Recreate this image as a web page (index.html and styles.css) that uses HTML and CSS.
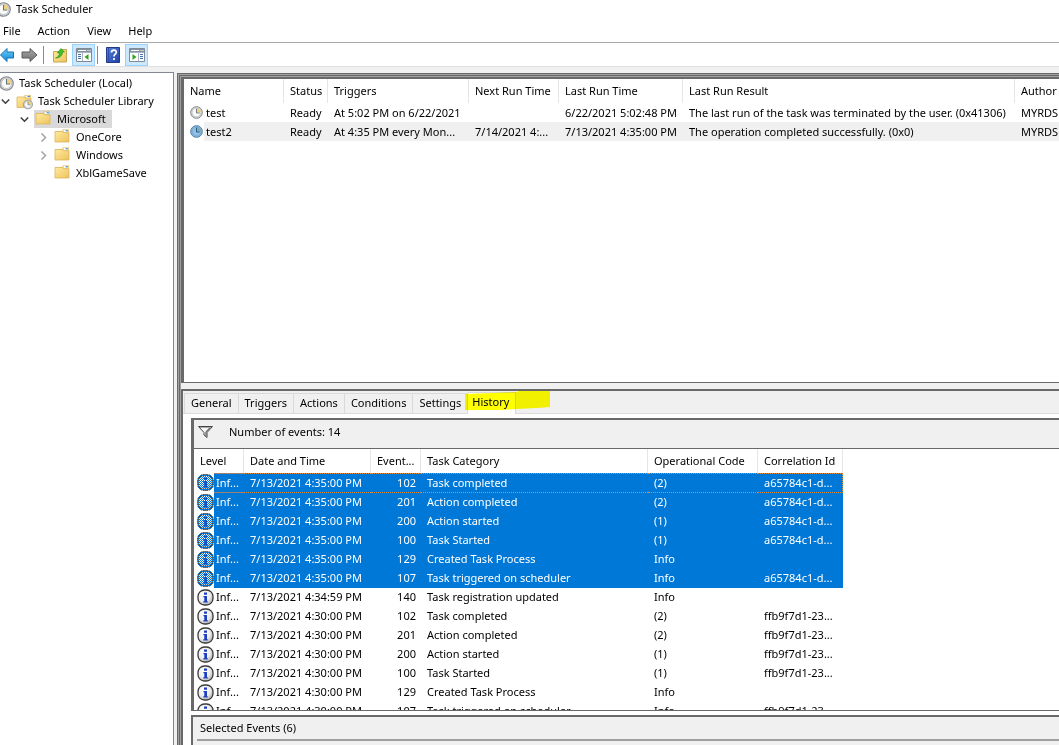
FILE: index.html
```html
<!DOCTYPE html>
<html lang="en">
<head>
<meta charset="utf-8">
<title>Task Scheduler</title>
<link rel="stylesheet" href="styles.css">
</head>
<body>
<svg class="defs" aria-hidden="true">
  <defs>
    <linearGradient id="folderFill" x1="0" y1="0" x2="1" y2="1"><stop offset="0" stop-color="#ffeaa0"/><stop offset="1" stop-color="#edc35c"/></linearGradient>
    <linearGradient id="arrowBlue" x1="0" y1="0" x2="0" y2="1"><stop offset="0" stop-color="#6fd0f7"/><stop offset="1" stop-color="#0c86d8"/></linearGradient>
    <linearGradient id="arrowGray" x1="0" y1="0" x2="0" y2="1"><stop offset="0" stop-color="#a8a8a8"/><stop offset="1" stop-color="#707070"/></linearGradient>
    <linearGradient id="helpFill" x1="0" y1="0" x2="1" y2="1"><stop offset="0" stop-color="#5b83dc"/><stop offset="1" stop-color="#1d3fa6"/></linearGradient>
    <radialGradient id="ball" cx=".4" cy=".35" r=".7"><stop offset="0" stop-color="#fff"/><stop offset=".6" stop-color="#ececec"/><stop offset="1" stop-color="#a8a8a8"/></radialGradient>
    <pattern id="dots" width="2" height="2" patternUnits="userSpaceOnUse"><path d="M0 0h1v1H0zM1 1h1v1H1z" fill="#0078d7"/></pattern>
  </defs>
  <symbol id="clock" viewBox="0 0 16 16">
    <circle cx="8" cy="8" r="7.2" fill="#d3d7dc" stroke="#85878a" stroke-width="1.2"/>
    <circle cx="8" cy="8" r="5.4" fill="#fbfbf6" stroke="#b4b8bd" stroke-width=".8"/>
    <path d="M8 8V2.8A5.2 5.2 0 0 1 13.2 8z" fill="#f3d078"/>
    <path d="M8 3.2V8.6H12" fill="none" stroke="#5f6f7c" stroke-width="1.1"/>
  </symbol>
  <symbol id="clockSel" viewBox="0 0 16 16">
    <circle cx="8" cy="8" r="7.2" fill="#8db9dd" stroke="#4b7ea8" stroke-width="1.2"/>
    <circle cx="8" cy="8" r="5.4" fill="#8fc0e8" stroke="#6d9dc4" stroke-width=".8"/>
    <path d="M8 8V2.8A5.2 5.2 0 0 1 13.2 8z" fill="#83b0a9"/>
    <path d="M8 3.2V8.6H12" fill="none" stroke="#234f78" stroke-width="1.1"/>
  </symbol>
  <symbol id="folder" viewBox="0 0 16 16">
    <path d="M1 3.5h7.500V1.500H15v3H1z" fill="#e2b653"/>
    <path d="M9.500 2h4.800v2.200H9.500z" fill="#fff"/><path d="M11.500 2.200h2.500v1.200h-2.500z" fill="#3a98dc"/>
    <path d="M1 3.500h7.500l.8 1.200H15V14H1z" fill="url(#folderFill)" stroke="#dcb45a" stroke-width=".8"/>
  </symbol>
  <symbol id="info" viewBox="0 0 17 17">
    <rect x="1" y="1" width="15" height="15" rx="6.500" fill="url(#ball)" stroke="#3b3b3b" stroke-width="1.300"/>
    <path d="M7 3.500h3v2.300H7zM6.400 7h3.600v5.200h.8v1.200H6.300v-1.200h1V8.200h-.9z" fill="#1c3fc0"/>
  </symbol>
  <symbol id="infoSel" viewBox="0 0 17 17">
    <use href="#info"/>
    <rect width="17" height="17" rx="7" fill="url(#dots)"/>
    <path d="M7 3.500h3v2.300H7zM6.400 7h3.600v5.200h.8v1.200H6.300v-1.200h1V8.200h-.9z" fill="#0b4fc4" opacity=".6"/>
  </symbol>
  <symbol id="down" viewBox="0 0 9 9"><path d="M.8 2.500l3.700 3.700L8.200 2.500" fill="none" stroke="#404040" stroke-width="1.600"/></symbol>
  <symbol id="right" viewBox="0 0 9 9"><path d="M2.500.5l4 4-4 4" fill="none" stroke="#a3a3a3" stroke-width="1.500"/></symbol>
</svg>

<header>
  <div class="title"><svg class="i15"><use href="#clock"/></svg><h1>Task Scheduler</h1></div>
  <nav class="menu"><button>File</button><button>Action</button><button>View</button><button>Help</button></nav>
  <div class="toolbar">
    <button class="back" aria-label="Back"><svg width="14" height="16" viewBox="0 0 14 16"><path d="M.5 8L7 1.500V5h6.500v6H7v3.500z" fill="url(#arrowBlue)" stroke="#1473b4"/></svg></button>
    <button class="fwd" aria-label="Forward"><svg width="17" height="16" viewBox="0 0 17 16"><path d="M16 8L9 1.500V5H1v6h8v3.500z" fill="url(#arrowGray)" stroke="#5c5c5c"/></svg></button>
    <i class="bar"></i>
    <button class="tool" aria-label="Up one level"><svg width="16" height="16" viewBox="0 0 16 16"><path d="M1.500 4.500h6l1.500-2h5.500V15h-13z" fill="url(#folderFill)" stroke="#c9a54f"/><path d="M3.500 11c2.500-1 4-2.500 4-5H5.300L9 1.500 12.500 5h-2c0 4-3 6-7 6z" fill="#3fc02c" stroke="#249216" stroke-width=".6"/></svg></button>
    <button class="tool on" aria-label="Show console tree"><svg width="16" height="16" viewBox="0 0 16 16"><path d="M.5 1.500h15v13H.5z" fill="#fff" stroke="#7f8a96"/><path d="M1 2h14v3H1z" fill="#8592a0"/><path d="M2 3h8v1H2zM11.500 3h1v1h-1zM13.500 3h1v1h-1z" fill="#fff"/><path d="M1 5.500h14M6.500 6v8" stroke="#a9b4c0"/><path d="M2 7.500h3M2 9.500h3M2 11.500h3" stroke="#4272b8"/><path d="M12.500 7v6L8.500 10z" fill="#2fa51d"/></svg></button>
    <i class="bar"></i>
    <button class="tool" aria-label="Help"><svg width="14" height="16" viewBox="0 0 14 16"><path d="M.5.500h13v15H.5z" fill="url(#helpFill)" stroke="#203a86"/><path d="M2.500 1v14" stroke="#2c4dab"/><path d="M5.500 5.500c0-3.300 4.800-3 4.800-.3 0 2-2.300 2-2.300 4.300M8 11v2" fill="none" stroke="#fff" stroke-width="1.700"/></svg></button>
    <button class="tool on" aria-label="Show action pane"><svg width="16" height="16" viewBox="0 0 16 16"><path d="M.5 1.500h15v13H.5z" fill="#fff" stroke="#7f8a96"/><path d="M1 2h14v3H1z" fill="#8592a0"/><path d="M2 3h8v1H2zM11.500 3h1v1h-1zM13.500 3h1v1h-1z" fill="#fff"/><path d="M1 5.500h14M9.500 6v8" stroke="#a9b4c0"/><path d="M11 7.500h3M11 9.500h3M11 11.500h3" stroke="#4272b8"/><path d="M3.500 7v6l4-3z" fill="#2fa51d"/></svg></button>
  </div>
</header>

<main>
  <ul class="tree">
    <li class="root"><svg class="i15"><use href="#clock"/></svg><span>Task Scheduler (Local)</span></li>
    <li class="l1"><svg class="chev"><use href="#down"/></svg><svg class="i17" viewBox="0 0 17 16"><use href="#folder" width="16" height="16"/><use href="#clock" x="7" y="6" width="10" height="10"/></svg><span>Task Scheduler Library</span></li>
    <li class="l2"><svg class="chev"><use href="#down"/></svg><span class="current"><svg class="i16"><use href="#folder"/></svg><span>Microsoft</span></span></li>
    <li class="l3"><svg class="chev"><use href="#right"/></svg><svg class="i16"><use href="#folder"/></svg><span>OneCore</span></li>
    <li class="l3"><svg class="chev"><use href="#right"/></svg><svg class="i16"><use href="#folder"/></svg><span>Windows</span></li>
    <li class="l3"><svg class="chev"></svg><svg class="i16"><use href="#folder"/></svg><span>XblGameSave</span></li>
  </ul>

  <div class="frame">
    <section class="tasks">
      <table>
        <colgroup><col class="w100"><col class="w44"><col class="w141"><col class="w90"><col class="w124"><col class="w332"><col class="w141"></colgroup>
        <thead><tr><th>Name</th><th>Status</th><th>Triggers</th><th>Next Run Time</th><th>Last Run Time</th><th>Last Run Result</th><th>Author</th></tr></thead>
        <tbody>
          <tr><td><div class="lead"><svg class="i13"><use href="#clock"/></svg>test</div></td><td>Ready</td><td>At 5:02 PM on 6/22/2021</td><td></td><td>6/22/2021 5:02:48 PM</td><td>The last run of the task was terminated by the user. (0x41306)</td><td>MYRDS</td></tr>
          <tr class="hot"><td><div class="lead"><svg class="i13"><use href="#clockSel"/></svg>test2</div></td><td>Ready</td><td>At 4:35 PM every Mon...</td><td>7/14/2021 4:...</td><td>7/13/2021 4:35:00 PM</td><td>The operation completed successfully. (0x0)</td><td>MYRDS</td></tr>
        </tbody>
      </table>
    </section>

    <section class="details">
      <div class="tabs">
        <button>General</button><button>Triggers</button><button>Actions</button><button>Conditions</button><button>Settings</button><button class="active">History</button>
        <svg class="marker" viewBox="0 0 85 20" aria-hidden="true"><path d="M0 3L28 2 53 1V0h32v16L72 17 52 18 35 19H0z" fill="#ff0"/></svg>
      </div>
      <div class="page">
        <div class="history">
          <div class="count"><svg width="15" height="12" viewBox="0 0 15 12"><path d="M.5.500h14L9 6.500v5L6 9V6.500z" fill="#f8f8f8" stroke="#444"/><path d="M2 1.500h11" stroke="#aaa"/><path d="M8 6l4-4M8 6v4" stroke="#777" stroke-width="1.500"/></svg>Number of events: 14</div>
          <div class="events">
            <table>
              <colgroup><col class="w50"><col class="w127"><col class="w50"><col class="w227"><col class="w110"><col class="w85"></colgroup>
              <thead><tr><th>Level</th><th>Date and Time</th><th>Event...</th><th>Task Category</th><th>Operational Code</th><th>Correlation Id</th></tr></thead>
              <tbody>
                <tr class="sel focus"><td><div class="lead"><svg class="i17"><use href="#infoSel"/></svg>Inf...</div></td><td>7/13/2021 4:35:00 PM</td><td class="num">102</td><td>Task completed</td><td>(2)</td><td>a65784c1-d...</td></tr>
                <tr class="sel"><td><div class="lead"><svg class="i17"><use href="#infoSel"/></svg>Inf...</div></td><td>7/13/2021 4:35:00 PM</td><td class="num">201</td><td>Action completed</td><td>(2)</td><td>a65784c1-d...</td></tr>
                <tr class="sel"><td><div class="lead"><svg class="i17"><use href="#infoSel"/></svg>Inf...</div></td><td>7/13/2021 4:35:00 PM</td><td class="num">200</td><td>Action started</td><td>(1)</td><td>a65784c1-d...</td></tr>
                <tr class="sel"><td><div class="lead"><svg class="i17"><use href="#infoSel"/></svg>Inf...</div></td><td>7/13/2021 4:35:00 PM</td><td class="num">100</td><td>Task Started</td><td>(1)</td><td>a65784c1-d...</td></tr>
                <tr class="sel"><td><div class="lead"><svg class="i17"><use href="#infoSel"/></svg>Inf...</div></td><td>7/13/2021 4:35:00 PM</td><td class="num">129</td><td>Created Task Process</td><td>Info</td><td></td></tr>
                <tr class="sel"><td><div class="lead"><svg class="i17"><use href="#infoSel"/></svg>Inf...</div></td><td>7/13/2021 4:35:00 PM</td><td class="num">107</td><td>Task triggered on scheduler</td><td>Info</td><td>a65784c1-d...</td></tr>
                <tr><td><div class="lead"><svg class="i17"><use href="#info"/></svg>Inf...</div></td><td>7/13/2021 4:34:59 PM</td><td class="num">140</td><td>Task registration updated</td><td>Info</td><td></td></tr>
                <tr><td><div class="lead"><svg class="i17"><use href="#info"/></svg>Inf...</div></td><td>7/13/2021 4:30:00 PM</td><td class="num">102</td><td>Task completed</td><td>(2)</td><td>ffb9f7d1-23...</td></tr>
                <tr><td><div class="lead"><svg class="i17"><use href="#info"/></svg>Inf...</div></td><td>7/13/2021 4:30:00 PM</td><td class="num">201</td><td>Action completed</td><td>(2)</td><td>ffb9f7d1-23...</td></tr>
                <tr><td><div class="lead"><svg class="i17"><use href="#info"/></svg>Inf...</div></td><td>7/13/2021 4:30:00 PM</td><td class="num">200</td><td>Action started</td><td>(1)</td><td>ffb9f7d1-23...</td></tr>
                <tr><td><div class="lead"><svg class="i17"><use href="#info"/></svg>Inf...</div></td><td>7/13/2021 4:30:00 PM</td><td class="num">100</td><td>Task Started</td><td>(1)</td><td>ffb9f7d1-23...</td></tr>
                <tr><td><div class="lead"><svg class="i17"><use href="#info"/></svg>Inf...</div></td><td>7/13/2021 4:30:00 PM</td><td class="num">129</td><td>Created Task Process</td><td>Info</td><td></td></tr>
                <tr><td><div class="lead"><svg class="i17"><use href="#info"/></svg>Inf...</div></td><td>7/13/2021 4:30:00 PM</td><td class="num">107</td><td>Task triggered on scheduler</td><td>Info</td><td>ffb9f7d1-23...</td></tr>
              </tbody>
            </table>
          </div>
        </div>
        <div class="selected"><h2>Selected Events (6)</h2></div>
      </div>
    </section>
  </div>
</main>
</body>
</html>
```

FILE: styles.css
```css
* { box-sizing: border-box; }
body {
  margin: 0;
  height: 100vh;
  display: flex;
  flex-direction: column;
  overflow: hidden;
  background: #f0f0f0;
  color: #000;
  font: 11px/18px "Noto Sans", "Open Sans", sans-serif;
  white-space: nowrap;
}
.defs { position: absolute; width: 0; height: 0; }
svg { display: block; flex: none; }
button { font: inherit; color: inherit; background: none; border: 0; margin: 0; padding: 0; }
h1, h2 { font: inherit; margin: 0; }
.i13 { width: 13px; height: 13px; }
.i15 { width: 15px; height: 15px; }
.i16 { width: 16px; height: 16px; }
.i17 { width: 17px; height: 17px; }

header { flex: none; background: #fff; border-bottom: 1px solid #e0e0e0; }
.title { display: flex; align-items: center; gap: 5px; height: 20px; margin-left: -4px; padding-bottom: 2px; }
.menu { display: flex; gap: 17px; height: 23px; padding: 2px 0 3px 3px; border-bottom: 1px solid #a8a8a8; }
.toolbar { display: flex; align-items: center; height: 23px; }
.tool { display: grid; place-items: center; width: 24px; height: 22px; }
.fwd { margin-left: 7px; }
.on { width: 23px; background: #cce8ff; border: 1px solid #99d1ff; }
.bar { width: 1px; height: 18px; margin: 0 4px 0 5px; background: #8c8c8c; }
.tool + .bar { margin: 0 3px 0 2px; }

main { flex: 1; min-height: 0; display: flex; padding-top: 5px; }
.tree {
  flex: 0 0 174px;
  margin: 0;
  padding: 1px 0;
  list-style: none;
  background: #fff;
  border: solid #828790;
  border-width: 1px 1px 0 0;
}
.tree li { display: flex; align-items: center; height: 18px; gap: 5px; }
.tree .i16 { margin-top: -2px; }
.chev { width: 9px; height: 9px; }
.tree .root { margin-left: -1px; }
.tree .l1 { padding-left: 1px; }
.tree .l1 .chev { margin-right: 1px; }
.tree .l2 { padding-left: 20px; }
.current { display: flex; align-items: center; gap: 6px; height: 18px; padding: 0 6px 0 1px; background: #d9d9d9; }
.tree .l3 { padding-left: 39px; gap: 6px; }

.frame {
  flex: 1;
  min-width: 0;
  display: flex;
  flex-direction: column;
  margin: 1px 0 0 3px;
  padding: 4px 0 0 4px;
  box-shadow: inset 1px 1px #696969, inset 2px 2px #a0a0a0, inset 3px 3px #696969, inset 4px 4px #a0a0a0;
}
table { border-collapse: separate; border-spacing: 0; table-layout: fixed; width: 0; }
.w44 { width: 44px; }
.w50 { width: 50px; }
.w85 { width: 85px; }
.w90 { width: 90px; }
.w100 { width: 100px; }
.w110 { width: 110px; }
.w124 { width: 124px; }
.w127 { width: 127px; }
.w141 { width: 141px; }
.w227 { width: 227px; }
.w332 { width: 332px; }
th, td { padding: 0 0 0 6px; text-align: left; font-weight: 400; }
th { height: 24px; border-right: 1px solid #e5e5e5; }
td { height: 19px; }
.lead { display: flex; align-items: center; gap: 3px; }
.num { text-align: right; padding-right: 5px; }

.tasks {
  flex: 305 1 0;
  min-height: 0;
  overflow: hidden;
  background: #fff;
  border: solid #696969;
  border-width: 2px 0 1px 3px;
}
.hot td { background: #f0f0f0; }
.hot td:first-child { background: linear-gradient(to right, #fff 20px, #f0f0f0 20px); }

.details {
  flex: 357 1 0;
  min-height: 0;
  display: flex;
  flex-direction: column;
  margin-top: 6px;
  border: solid #696969;
  border-width: 2px 0 0 2px;
  overflow: hidden;
}
.tabs { position: relative; flex: none; display: flex; align-items: flex-end; height: 23px; padding: 0 1px; border-bottom: 1px solid #dcdcdc; }
.tabs button { height: 20px; padding: 0 6px; border: solid #d9d9d9; border-width: 1px 1px 0 0; }
.tabs button:first-child { border-left-width: 1px; }
.tabs .active { height: 22px; margin-bottom: -1px; padding: 0 6px 4px 4px; background: #fff; }
.marker { position: absolute; left: 282px; top: 0; width: 85px; height: 20px; mix-blend-mode: multiply; }
.page { flex: 1; min-height: 0; display: flex; flex-direction: column; gap: 4px; padding: 4px 0 0 8px; background: #fff; }
.history { flex: 1; min-height: 0; display: flex; flex-direction: column; border: solid #696969; border-width: 2px 0 1px 3px; }
.count { flex: none; display: flex; align-items: center; gap: 16px; height: 29px; padding: 0 0 3px 4px; background: #f0f0f0; border-bottom: 1px solid #696969; }
.events { flex: 1; min-height: 0; overflow: hidden; }
.events .lead { margin-left: -3px; gap: 2px; }
.sel td { background: #0078d7; color: #fff; }
.sel td:first-child { background: linear-gradient(to right, #fff 20px, #0078d7 20px); }
.focus td { border: dotted #e08a3c; border-width: 1px 0; }
.focus td:first-child { border-image: linear-gradient(to right, transparent 20px, #a08070 20px) 1; }
.focus td:last-child { border-right-width: 1px; }
.selected { flex: 0 0 30px; padding: 2px 0 0 4px; background: #f0f0f0; border: solid #696969; border-width: 2px 0 0 2px; }
.selected h2 { height: 22px; padding-left: 3px; border-bottom: 2px solid #a0a0a0; }
```
